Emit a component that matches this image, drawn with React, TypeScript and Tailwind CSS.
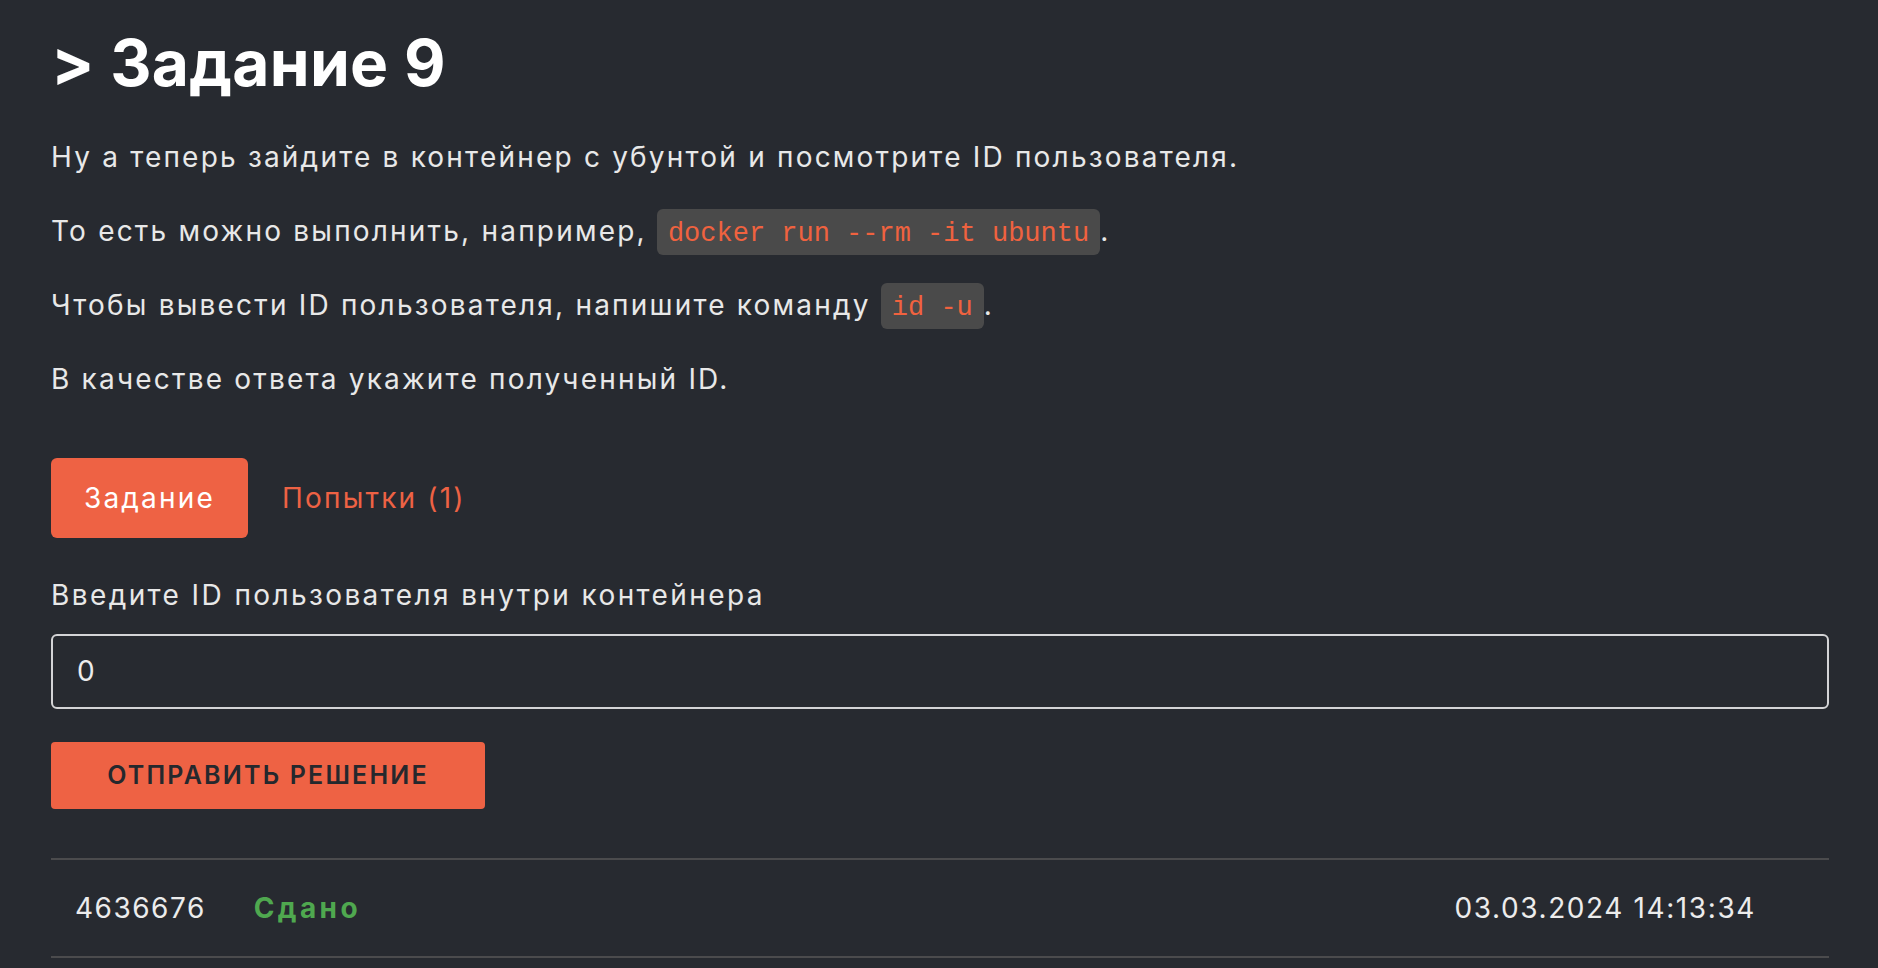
import React from "react";

export default function App() {
  return (
    <div
      className="min-h-screen bg-[#272a30] text-[#e8e8e8] pl-[51px] pr-[49px] pt-[25px] pb-[40px] tracking-[2.2px]"
      style={{ fontFamily: "Inter, 'Noto Sans', sans-serif" }}
    >
      <h1 className="text-[64px] leading-[1.2] font-bold text-white tracking-[0.3px]">&gt; Задание 9</h1>

      <div className="mt-[34px] flex flex-col gap-[32px] text-[28px] leading-[42px]">
        <p>Ну а теперь зайдите в контейнер с убунтой и посмотрите ID пользователя.</p>
        <p>
          То есть можно выполнить, например,{" "}
          <code
            className="bg-[#4a4a4a] text-[#f0623f] rounded-[6px] px-[11px] pt-[10px] pb-[6px] text-[27px] leading-none tracking-normal"
            style={{ fontFamily: "'Liberation Mono', monospace" }}
          >
            docker run --rm -it ubuntu
          </code>
          .
        </p>
        <p>
          Чтобы вывести ID пользователя, напишите команду{" "}
          <code
            className="bg-[#4a4a4a] text-[#f0623f] rounded-[6px] px-[11px] pt-[10px] pb-[6px] text-[27px] leading-none tracking-normal"
            style={{ fontFamily: "'Liberation Mono', monospace" }}
          >
            id -u
          </code>
          .
        </p>
        <p>В качестве ответа укажите полученный ID.</p>
      </div>

      <div className="mt-[58px] flex items-center text-[28px]">
        <div className="w-[197px] h-[80px] rounded-[6px] bg-[#ee6244] text-white flex items-center justify-center">
          Задание
        </div>
        <div className="pl-[34px] text-[#ee6244]">Попытки (1)</div>
      </div>

      <div className="mt-[36px] text-[28px] leading-[42px] tracking-[2.4px]">Введите ID пользователя внутри контейнера</div>

      <div className="mt-[18px] h-[75px] rounded-[6px] border-2 border-[#d4d4d6] flex items-center pl-[24px] text-[28px] text-[#ececec]">
        0
      </div>

      <button className="mt-[33px] w-[434px] h-[67px] rounded-[4px] bg-[#ee6244] text-[#25282d] text-[25px] font-semibold uppercase tracking-[2.2px] flex items-center justify-center">
        Отправить решение
      </button>

      <div className="mt-[49px] border-t-2 border-b-2 border-[#4b4b4d] h-[100px] flex items-center text-[28px] pl-[24px] pr-[73px] tracking-[1.5px]">
        <span className="text-[#ececec]">4636676</span>
        <span className="ml-[48px] font-bold text-[#4fa84f] tracking-[3.4px]">Сдано</span>
        <span className="ml-auto text-[#ececec] tracking-[1.6px]">03.03.2024 14:13:34</span>
      </div>
    </div>
  );
}
